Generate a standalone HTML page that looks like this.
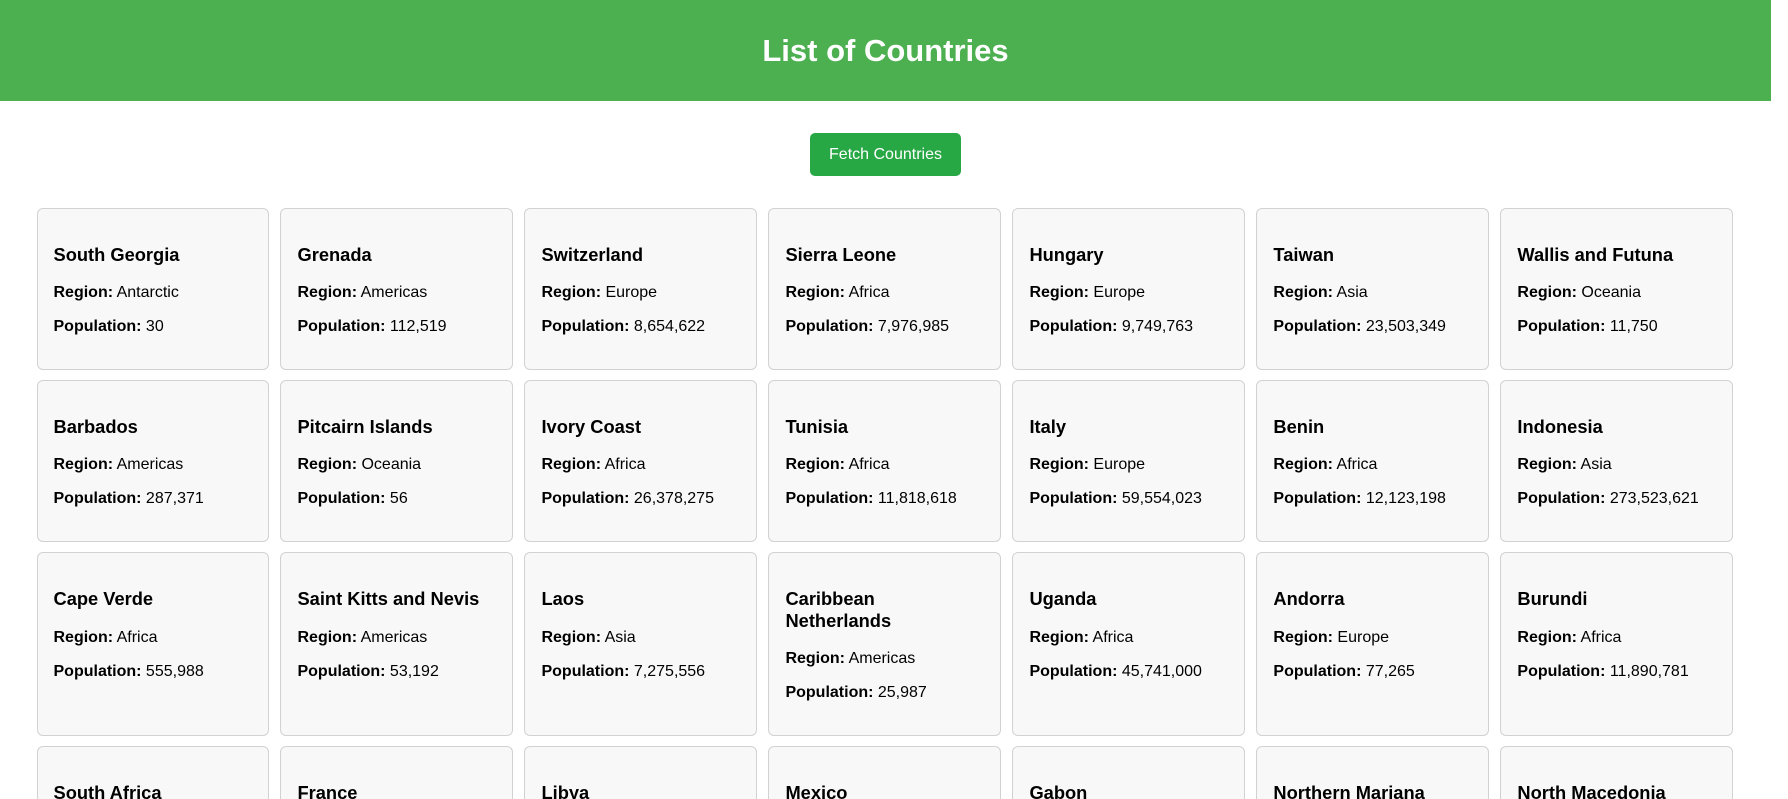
<!DOCTYPE html>
<html><head><style>
*{box-sizing:border-box}
html,body{height:799px;overflow:hidden}
body{margin:0;font-family:"Liberation Sans",Arial,sans-serif;background:#fff;color:#000}
header{background:#4CAF50;height:101px;width:1771px;display:flex;align-items:center;justify-content:center}
header h1{margin:0;color:#fff;font-size:31px;font-weight:bold}
.btnwrap{text-align:center;width:1771px;padding-top:32px;height:107px}
button{background:#28a745;color:#fff;border:none;border-radius:5px;font-family:inherit;font-size:16px;width:151px;height:43px}
.grid{display:grid;grid-template-columns:repeat(7,232.6px);column-gap:11.4px;row-gap:10px;padding-left:36.5px}
.card{background:#f8f8f8;border:1.5px solid #d2d2d2;border-radius:6px;padding:1px 16px}
.card h3{margin:33.5px 0 19px;font-size:18.3px;line-height:21.7px}
.card p{margin:16px 0;font-size:16px;line-height:18px}
.card p:last-child{margin-bottom:32px}
</style></head><body>
<header><h1>List of Countries</h1></header>
<div class="btnwrap"><button>Fetch Countries</button></div>
<div class="grid">
<div class="card"><h3>South Georgia</h3><p><b>Region:</b> Antarctic</p><p><b>Population:</b> 30</p></div>
<div class="card"><h3>Grenada</h3><p><b>Region:</b> Americas</p><p><b>Population:</b> 112,519</p></div>
<div class="card"><h3>Switzerland</h3><p><b>Region:</b> Europe</p><p><b>Population:</b> 8,654,622</p></div>
<div class="card"><h3>Sierra Leone</h3><p><b>Region:</b> Africa</p><p><b>Population:</b> 7,976,985</p></div>
<div class="card"><h3>Hungary</h3><p><b>Region:</b> Europe</p><p><b>Population:</b> 9,749,763</p></div>
<div class="card"><h3>Taiwan</h3><p><b>Region:</b> Asia</p><p><b>Population:</b> 23,503,349</p></div>
<div class="card"><h3>Wallis and Futuna</h3><p><b>Region:</b> Oceania</p><p><b>Population:</b> 11,750</p></div>
<div class="card"><h3>Barbados</h3><p><b>Region:</b> Americas</p><p><b>Population:</b> 287,371</p></div>
<div class="card"><h3>Pitcairn Islands</h3><p><b>Region:</b> Oceania</p><p><b>Population:</b> 56</p></div>
<div class="card"><h3>Ivory Coast</h3><p><b>Region:</b> Africa</p><p><b>Population:</b> 26,378,275</p></div>
<div class="card"><h3>Tunisia</h3><p><b>Region:</b> Africa</p><p><b>Population:</b> 11,818,618</p></div>
<div class="card"><h3>Italy</h3><p><b>Region:</b> Europe</p><p><b>Population:</b> 59,554,023</p></div>
<div class="card"><h3>Benin</h3><p><b>Region:</b> Africa</p><p><b>Population:</b> 12,123,198</p></div>
<div class="card"><h3>Indonesia</h3><p><b>Region:</b> Asia</p><p><b>Population:</b> 273,523,621</p></div>
<div class="card"><h3>Cape Verde</h3><p><b>Region:</b> Africa</p><p><b>Population:</b> 555,988</p></div>
<div class="card"><h3>Saint Kitts and Nevis</h3><p><b>Region:</b> Americas</p><p><b>Population:</b> 53,192</p></div>
<div class="card"><h3>Laos</h3><p><b>Region:</b> Asia</p><p><b>Population:</b> 7,275,556</p></div>
<div class="card"><h3>Caribbean Netherlands</h3><p><b>Region:</b> Americas</p><p><b>Population:</b> 25,987</p></div>
<div class="card"><h3>Uganda</h3><p><b>Region:</b> Africa</p><p><b>Population:</b> 45,741,000</p></div>
<div class="card"><h3>Andorra</h3><p><b>Region:</b> Europe</p><p><b>Population:</b> 77,265</p></div>
<div class="card"><h3>Burundi</h3><p><b>Region:</b> Africa</p><p><b>Population:</b> 11,890,781</p></div>
<div class="card"><h3>South Africa</h3><p><b>Region:</b> Africa</p><p><b>Population:</b> 59,308,690</p></div>
<div class="card"><h3>France</h3><p><b>Region:</b> Europe</p><p><b>Population:</b> 67,391,582</p></div>
<div class="card"><h3>Libya</h3><p><b>Region:</b> Africa</p><p><b>Population:</b> 6,871,287</p></div>
<div class="card"><h3>Mexico</h3><p><b>Region:</b> Americas</p><p><b>Population:</b> 128,932,753</p></div>
<div class="card"><h3>Gabon</h3><p><b>Region:</b> Africa</p><p><b>Population:</b> 2,225,728</p></div>
<div class="card"><h3>Northern Mariana Islands</h3><p><b>Region:</b> Oceania</p><p><b>Population:</b> 57,557</p></div>
<div class="card"><h3>North Macedonia</h3><p><b>Region:</b> Europe</p><p><b>Population:</b> 2,077,132</p></div>
</div>
</body></html>
